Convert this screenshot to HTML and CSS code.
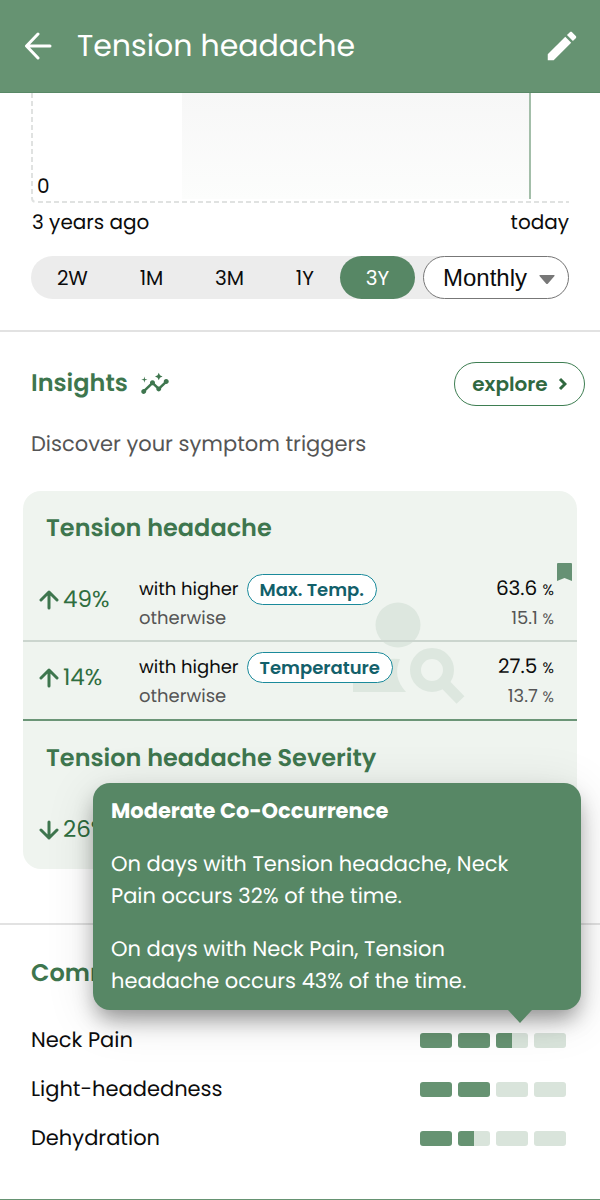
FILE: index.html
```html
<!DOCTYPE html>
<html lang="en">
<head>
<meta charset="utf-8">
<meta name="viewport" content="width=device-width, initial-scale=1">
<title>Tension headache</title>
<link rel="stylesheet" href="styles.css">
</head>
<body>
<header class="app-bar">
  <button class="icon-button" aria-label="Back">
    <svg width="28" height="28" viewBox="0 0 28 28" fill="none" stroke="currentColor" stroke-width="3" stroke-linecap="round" stroke-linejoin="round"><path d="M26 14H3M14 2 2.500 14 14 26"/></svg>
  </button>
  <h1 class="app-title">Tension headache</h1>
  <button class="icon-button" aria-label="Edit">
    <svg width="38" height="38" viewBox="0 0 24 24" fill="currentColor"><path d="M3 17.250V21h3.750L17.810 9.940l-3.750-3.750L3 17.250zM20.710 7.040c.39-.39.39-1.020 0-1.410l-2.340-2.340c-.39-.39-1.020-.39-1.410 0l-1.830 1.830 3.750 3.750 1.830-1.830z"/></svg>
  </button>
</header>
<main>
  <section class="history">
    <div class="chart">
      <svg class="chart-frame" aria-hidden="true"><line x1="1" y1="0" x2="1" y2="105"/><path d="M1 105Q1 109 5 109"/><line x1="7" y1="109" x2="100%" y2="109"/></svg>
      <span class="chart-zero">0</span>
      <div class="chart-band"></div>
    </div>
    <div class="chart-range"><span>3 years ago</span><span>today</span></div>
    <div class="controls">
      <div class="periods">
        <button class="period">2W</button>
        <button class="period">1M</button>
        <button class="period">3M</button>
        <button class="period">1Y</button>
        <button class="period period-active" aria-pressed="true">3Y</button>
      </div>
      <div class="interval">
        <select class="interval-select" aria-label="Interval"><option>Monthly</option></select>
        <svg class="interval-arrow" width="16" height="9" viewBox="0 0 16 9" aria-hidden="true"><path fill="#777" d="M1 0h14q1 0 .5 1L9 8.500q-1 1-2 0L.5 1Q0 0 1 0z"/></svg>
      </div>
    </div>
  </section>

  <section class="insights">
    <div class="section-head">
      <h2 class="section-title">Insights</h2>
      <svg class="insights-icon" width="30" height="30" viewBox="0 0 24 24" fill="currentColor" aria-hidden="true"><path d="M21 8c-1.450 0-2.260 1.440-1.930 2.510l-3.550 3.560c-.3-.09-.74-.09-1.040 0l-2.550-2.550C12.270 10.450 11.460 9 10 9c-1.450 0-2.270 1.440-1.930 2.520l-4.560 4.550C2.440 15.740 1 16.550 1 18c0 1.100.9 2 2 2 1.450 0 2.260-1.440 1.930-2.510l4.550-4.560c.3.090.74.090 1.040 0l2.550 2.550C12.730 16.550 13.540 18 15 18c1.450 0 2.270-1.440 1.930-2.520l3.560-3.550C21.560 12.260 23 11.450 23 10c0-1.100-.9-2-2-2z"/><path d="m15 9 .94-2.070L18 6l-2.060-.93L15 3l-.92 2.070L12 6l2.080.93zM3.500 11 4 9l2-.5L4 8l-.5-2L3 8l-2 .5L3 9z"/></svg>
      <button class="explore">explore
        <svg width="9" height="14" viewBox="0 0 9 14" fill="none" stroke="currentColor" stroke-width="3" aria-hidden="true"><path d="m2 2 5 5-5 5"/></svg>
      </button>
    </div>
    <p class="lead">Discover your symptom triggers</p>

    <div class="card">
      <div class="triggers">
        <svg class="watermark" width="114" height="104" viewBox="0 0 114 104" aria-hidden="true"><circle cx="45" cy="23" r="22.500"/><path d="M0 90V78Q2 65 18 60Q32 56 47 57Q39 75 53 90z"/><circle cx="79" cy="68" r="16.500" fill="none" stroke="#dde7df" stroke-width="11"/><path d="m90 80 17.500 18" stroke="#dde7df" stroke-width="11"/></svg>
        <h3 class="card-title">Tension headache</h3>
        <div class="trigger">
          <div class="change"><svg width="20" height="20" viewBox="0 0 20 20"><path d="M10 18V2M2 10l8-8 8 8"/></svg>49%</div>
          <div class="compare">
            <div class="line"><span>with higher</span><button class="factor">Max. Temp.</button><span class="value">63.6 <small>%</small></span></div>
            <div class="line line-muted"><span>otherwise</span><span class="value">15.1 <small>%</small></span></div>
          </div>
          <svg class="bookmark" width="15" height="18" viewBox="0 0 15 18" aria-label="Bookmarked"><path fill="#669174" d="M1 0h13q1 0 1 1v17l-7.500-3L0 18V1q0-1 1-1z"/></svg>
        </div>
        <div class="trigger trigger-last">
          <div class="change"><svg width="20" height="20" viewBox="0 0 20 20"><path d="M10 18V2M2 10l8-8 8 8"/></svg>14%</div>
          <div class="compare">
            <div class="line"><span>with higher</span><button class="factor">Temperature</button><span class="value">27.5 <small>%</small></span></div>
            <div class="line line-muted"><span>otherwise</span><span class="value">13.7 <small>%</small></span></div>
          </div>
        </div>
      </div>
      <h3 class="card-title">Tension headache Severity</h3>
      <div class="trigger trigger-last">
        <div class="change"><svg width="20" height="20" viewBox="0 0 20 20"><path d="M10 2v16M2 10l8 8 8-8"/></svg>26%</div>
      </div>
    </div>
  </section>

  <section class="common">
    <h2 class="section-title">Common</h2>
    <div class="tooltip" role="tooltip">
      <strong>Moderate Co-Occurrence</strong>
      <p>On days with Tension headache, Neck Pain occurs 32% of the time.</p>
      <p>On days with Neck Pain, Tension headache occurs 43% of the time.</p>
    </div>
    <ul class="symptoms">
      <li class="symptom">Neck Pain<span class="meter"><i class="full"></i><i class="full"></i><i class="half"></i><i></i></span></li>
      <li class="symptom">Light-headedness<span class="meter"><i class="full"></i><i class="full"></i><i></i><i></i></span></li>
      <li class="symptom">Dehydration<span class="meter"><i class="full"></i><i class="half"></i><i></i><i></i></span></li>
    </ul>
  </section>
</main>
</body>
</html>
```
FILE: styles.css
```css
* { box-sizing: border-box; }

body {
  margin: 0;
  background: #fff;
  color: #0c0c0c;
  font: 20px/30px Poppins, Inter, sans-serif;
  text-rendering: geometricPrecision;
}

h1, h2, h3, p, ul { margin: 0; padding: 0; }
button, select { margin: 0; font: inherit; color: inherit; cursor: pointer; }
svg { display: block; flex: none; }

.app-bar {
  display: flex;
  align-items: center;
  height: 93px;
  padding: 0 19px 0 24px;
  background: #669372;
  border-bottom: 1px solid #588866;
  color: #fff;
}
.icon-button { padding: 0; border: 0; background: none; }
.app-title { flex: 1; margin-left: 25px; font-size: 30px; line-height: 40px; font-weight: 400; }

.history { padding: 0 31px 31px; border-bottom: 2px solid #e2e2e2; }
.chart { display: flex; position: relative; height: 110px; }
.chart-frame { position: absolute; inset: 0; width: 100%; height: 100%; }
.chart-frame > * { fill: none; stroke: #e0e2e1; stroke-width: 2; stroke-dasharray: 5 3; }
.chart-zero { align-self: flex-end; width: 28%; padding-left: 6px; line-height: 34px; }
.chart-band {
  flex: 1;
  height: 106px;
  margin-right: 38px;
  background: linear-gradient(#f7f7f7, #fcfdfc);
  border-right: 2px solid #a3bea9;
}
.chart-range { display: flex; justify-content: space-between; padding-left: 1px; line-height: 38px; }
.controls { display: flex; gap: 8px; height: 43px; margin-top: 15px; background: #ececec; border-radius: 22px; }
.periods { display: flex; flex: 1; }
.period { flex: auto; padding: 0; border: 0; border-radius: 22px; background: none; }
.period-active { background: #578765; color: #fff; }
.interval { position: relative; width: 146px; }
.interval-select {
  width: 100%;
  height: 100%;
  padding: 0 36px 0 19px;
  appearance: none;
  border: 1px solid #777;
  border-radius: 22px;
  background: #fff;
  font: 24px "Liberation Sans", Arial, sans-serif;
}
.interval-arrow { position: absolute; right: 14px; top: 19px; pointer-events: none; }

.insights { padding: 30px 23px 54px; border-bottom: 2px solid #e2e2e2; }
.section-title { color: #3e764e; font-size: 24px; line-height: 32px; font-weight: 600; }
.section-head { display: flex; align-items: center; margin: 0 -8px 0 8px; }
.insights-icon { margin-left: 12px; color: #3e764e; }
.explore {
  display: flex;
  align-items: center;
  justify-content: center;
  gap: 10px;
  width: 131px;
  height: 44px;
  margin-left: auto;
  padding: 0;
  border: 1px solid #3e7e52;
  border-radius: 22px;
  background: #fff;
  color: #30683f;
  font-weight: 600;
}
.lead { margin: 21px 8px 0; color: #555; font-size: 21px; line-height: 36px; }

.card { height: 378px; margin-top: 28px; background: #eff4ef; border-radius: 18px; }
.triggers { position: relative; border-bottom: 2px solid #6b9577; }
.card-title { position: relative; padding: 22px 23px 19px; color: #3e764e; font-size: 24px; line-height: 32px; font-weight: 600; }
.watermark { position: absolute; left: 330px; top: 111px; fill: #dde7df; }
.trigger { position: relative; display: flex; align-items: flex-start; height: 78px; padding: 0 23px 0 16px; border-bottom: 2px solid #cbd5ce; }
.trigger-last { height: 77px; border: 0; }
.change { display: flex; align-items: center; gap: 4px; width: 100px; color: #2f6e40; font-size: 23px; line-height: 72px; }
.change svg { fill: none; stroke: #3e764e; stroke-width: 3; stroke-linecap: round; stroke-linejoin: round; }
.compare { flex: 1; padding-top: 10px; }
.line { display: flex; align-items: center; height: 31px; font-size: 18px; }
.line-muted { height: 28px; color: #555; }
.factor {
  height: 31px;
  margin-left: 8px;
  padding: 0 12px;
  border: 1px solid #1a8a9b;
  border-radius: 16px;
  background: #fff;
  color: #12606a;
  line-height: 28px;
  font-weight: 600;
}
.value { margin-left: auto; font-size: 20px; }
.line-muted .value { font-size: 18px; }
.value small { font-size: 15px; }
.bookmark { position: absolute; right: 5px; top: -1px; }

.common { position: relative; padding: 33px 31px 36px; border-bottom: 1px solid #669372; }
.tooltip {
  position: absolute;
  right: 19px;
  top: -142px;
  width: 488px;
  padding: 13px 18px 12px;
  border-radius: 17px;
  background: #578765;
  box-shadow: 0 12px 22px -4px rgba(0, 0, 0, .4), 0 8px 50px rgba(0, 0, 0, .12);
  color: #fff;
  font-size: 21px;
  line-height: 32px;
}
.tooltip::after {
  content: "";
  position: absolute;
  right: 49px;
  top: 100%;
  border: 12px solid transparent;
  border-top: 13px solid #578765;
  border-bottom: 0;
}
.tooltip strong { display: block; font-weight: 700; }
.tooltip p { margin-top: 21px; padding-right: 36px; }
.symptoms { margin-top: 26px; list-style: none; }
.symptom { display: flex; align-items: center; justify-content: space-between; height: 49px; font-size: 21px; }
.meter { display: flex; gap: 6px; margin-right: 3px; }
.meter i { width: 32px; height: 15px; border-radius: 3px; background: #d9e4db; }
.meter .full { background: #669372; }
.meter .half { background: linear-gradient(90deg, #669372 50%, #d9e4db 50%); }
```
